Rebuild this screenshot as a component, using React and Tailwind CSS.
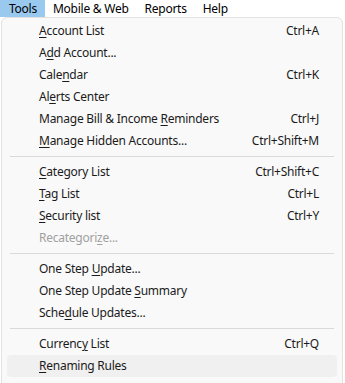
import React from 'react';

const groups = [
  [
    { pre: '', key: 'A', post: 'ccount List', shortcut: 'Ctrl+A' },
    { pre: 'A', key: 'd', post: 'd Account...' },
    { pre: 'Cale', key: 'n', post: 'dar', shortcut: 'Ctrl+K' },
    { pre: 'Al', key: 'e', post: 'rts Center' },
    { pre: 'Manage Bill & Income ', key: 'R', post: 'eminders', shortcut: 'Ctrl+J' },
    { pre: '', key: 'M', post: 'anage Hidden Accounts...', shortcut: 'Ctrl+Shift+M' },
  ],
  [
    { pre: '', key: 'C', post: 'ategory List', shortcut: 'Ctrl+Shift+C' },
    { pre: '', key: 'T', post: 'ag List', shortcut: 'Ctrl+L' },
    { pre: '', key: 'S', post: 'ecurity list', shortcut: 'Ctrl+Y' },
    { pre: 'Recategori', key: 'z', post: 'e...', disabled: true },
  ],
  [
    { pre: 'One Step ', key: 'U', post: 'pdate...' },
    { pre: 'One Step Update ', key: 'S', post: 'ummary' },
    { pre: 'Sche', key: 'd', post: 'ule Updates...' },
  ],
  [
    { pre: 'Currenc', key: 'y', post: ' List', shortcut: 'Ctrl+Q' },
    { pre: '', key: 'R', post: 'enaming Rules', hover: true },
  ],
];

function MenuItem({ item }) {
  return (
    <div
      className={`h-[22px] mx-[5px] pl-[32px] pr-[18px] flex items-center justify-between rounded-[4px] ${
        item.hover ? 'bg-[#f0f0f0]' : ''
      } ${item.disabled ? 'text-[#a0a0a0]' : 'text-[#1b1b1b]'}`}
    >
      <span>
        {item.pre}
        <u className="underline-offset-2">{item.key}</u>
        {item.post}
      </span>
      {item.shortcut && <span>{item.shortcut}</span>}
    </div>
  );
}

export default function App() {
  return (
    <div
      className="w-[345px] h-[383px] bg-white overflow-hidden text-[12px] leading-none tracking-[-0.25px]"
      style={{ fontFamily: '"Noto Sans", "Open Sans", sans-serif' }}
    >
      <div className="h-[17px] flex items-center text-black">
        <div className="h-full pl-[9px] pr-[8px] flex items-center bg-[#99c9ef]">Tools</div>
        <div className="h-full px-[8px] flex items-center">Mobile &amp; Web</div>
        <div className="h-full px-[8px] flex items-center">Reports</div>
        <div className="h-full px-[8px] flex items-center">Help</div>
      </div>
      <div className="ml-[1px] w-[342px] h-[380px] bg-[#f9f9f9] border border-[#e3e3e3] rounded-[6px] pt-[2px]">
        {groups.map((g, i) => (
          <div key={i}>
            {i > 0 && (
              <div className="h-[9px] flex items-center px-[8px]">
                <div className="h-px w-full bg-[#d9d9d9]" />
              </div>
            )}
            {g.map((item, j) => (
              <MenuItem key={j} item={item} />
            ))}
          </div>
        ))}
      </div>
    </div>
  );
}
